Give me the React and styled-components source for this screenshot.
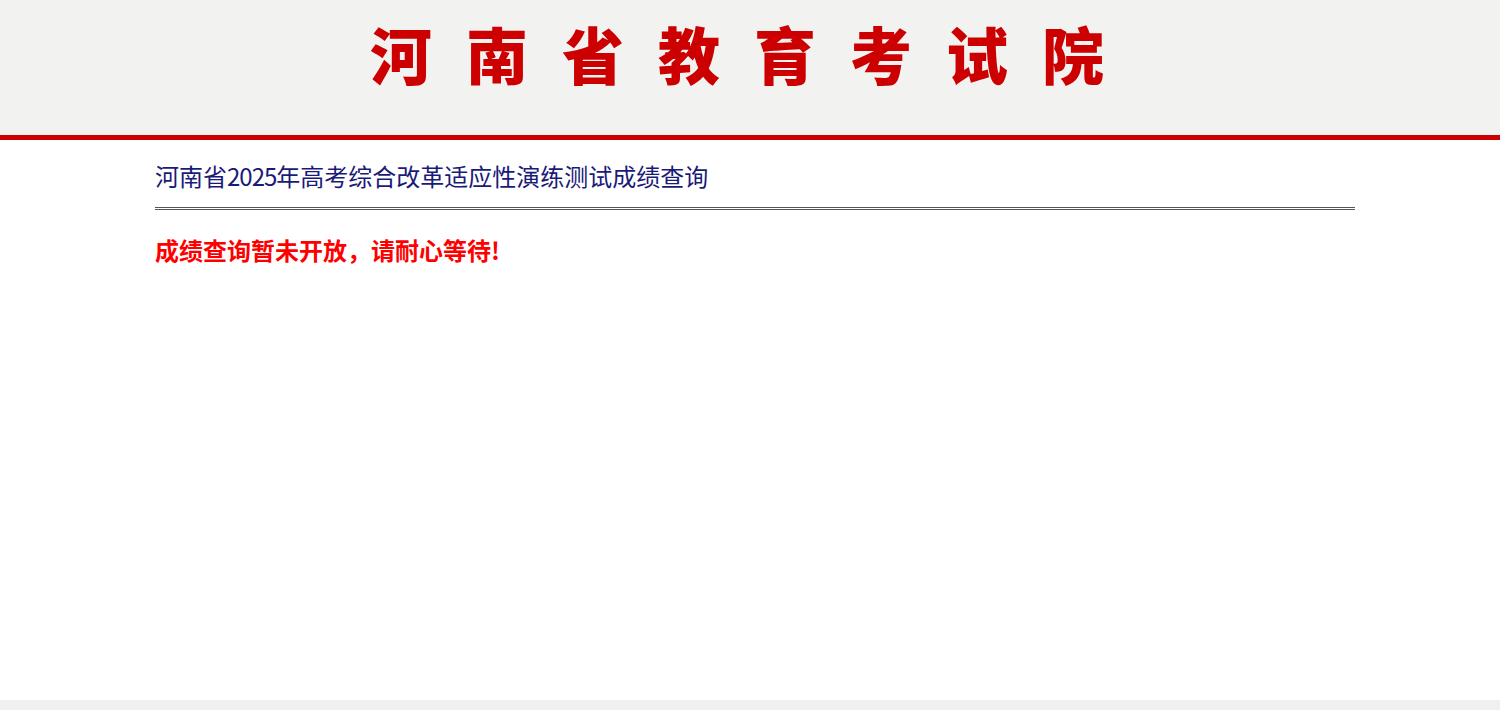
import React from 'react';
import styled, { createGlobalStyle } from 'styled-components';

const GlobalStyle = createGlobalStyle`
  html, body {
    margin: 0;
    padding: 0;
    background: #fff;
    font-family: "Noto Sans CJK SC", "Noto Sans", sans-serif;
  }
`;

const Page = styled.div`
  min-height: 100vh;
  display: flex;
  flex-direction: column;
`;

const Header = styled.header`
  height: 135px;
  background: #f2f2f0;
  border-bottom: 5px solid #cc0000;
  display: flex;
  justify-content: center;
  align-items: flex-start;
`;

const Logo = styled.h1`
  margin: 0;
  padding-top: 10px;
  padding-left: 8px;
  font-size: 62px;
  line-height: 86px;
  font-weight: 900;
  letter-spacing: 34px;
  color: #cc0000;
`;

const Main = styled.main`
  flex: 1;
  width: 1200px;
  margin-left: calc(50% - 595px);
`;

const Title = styled.div`
  padding-top: 19px;
  padding-bottom: 14px;
  font-size: 24px;
  line-height: 34px;
  color: #1a1a78;
  border-bottom: 3px double #555;
`;

const Digits = styled.span`
  letter-spacing: -1px;
`;

const Notice = styled.p`
  margin: 20px 0 0;
  font-size: 24px;
  line-height: 40px;
  font-weight: 700;
  color: #ff0000;
`;

const Footer = styled.footer`
  height: 10px;
  background: #f0f0f0;
`;

export default function App() {
  return (
    <Page>
      <GlobalStyle />
      <Header>
        <Logo>河南省教育考试院</Logo>
      </Header>
      <Main>
        <Title>
          河南省<Digits>2025</Digits>年高考综合改革适应性演练测试成绩查询
        </Title>
        <Notice>成绩查询暂未开放，请耐心等待!</Notice>
      </Main>
      <Footer />
    </Page>
  );
}
